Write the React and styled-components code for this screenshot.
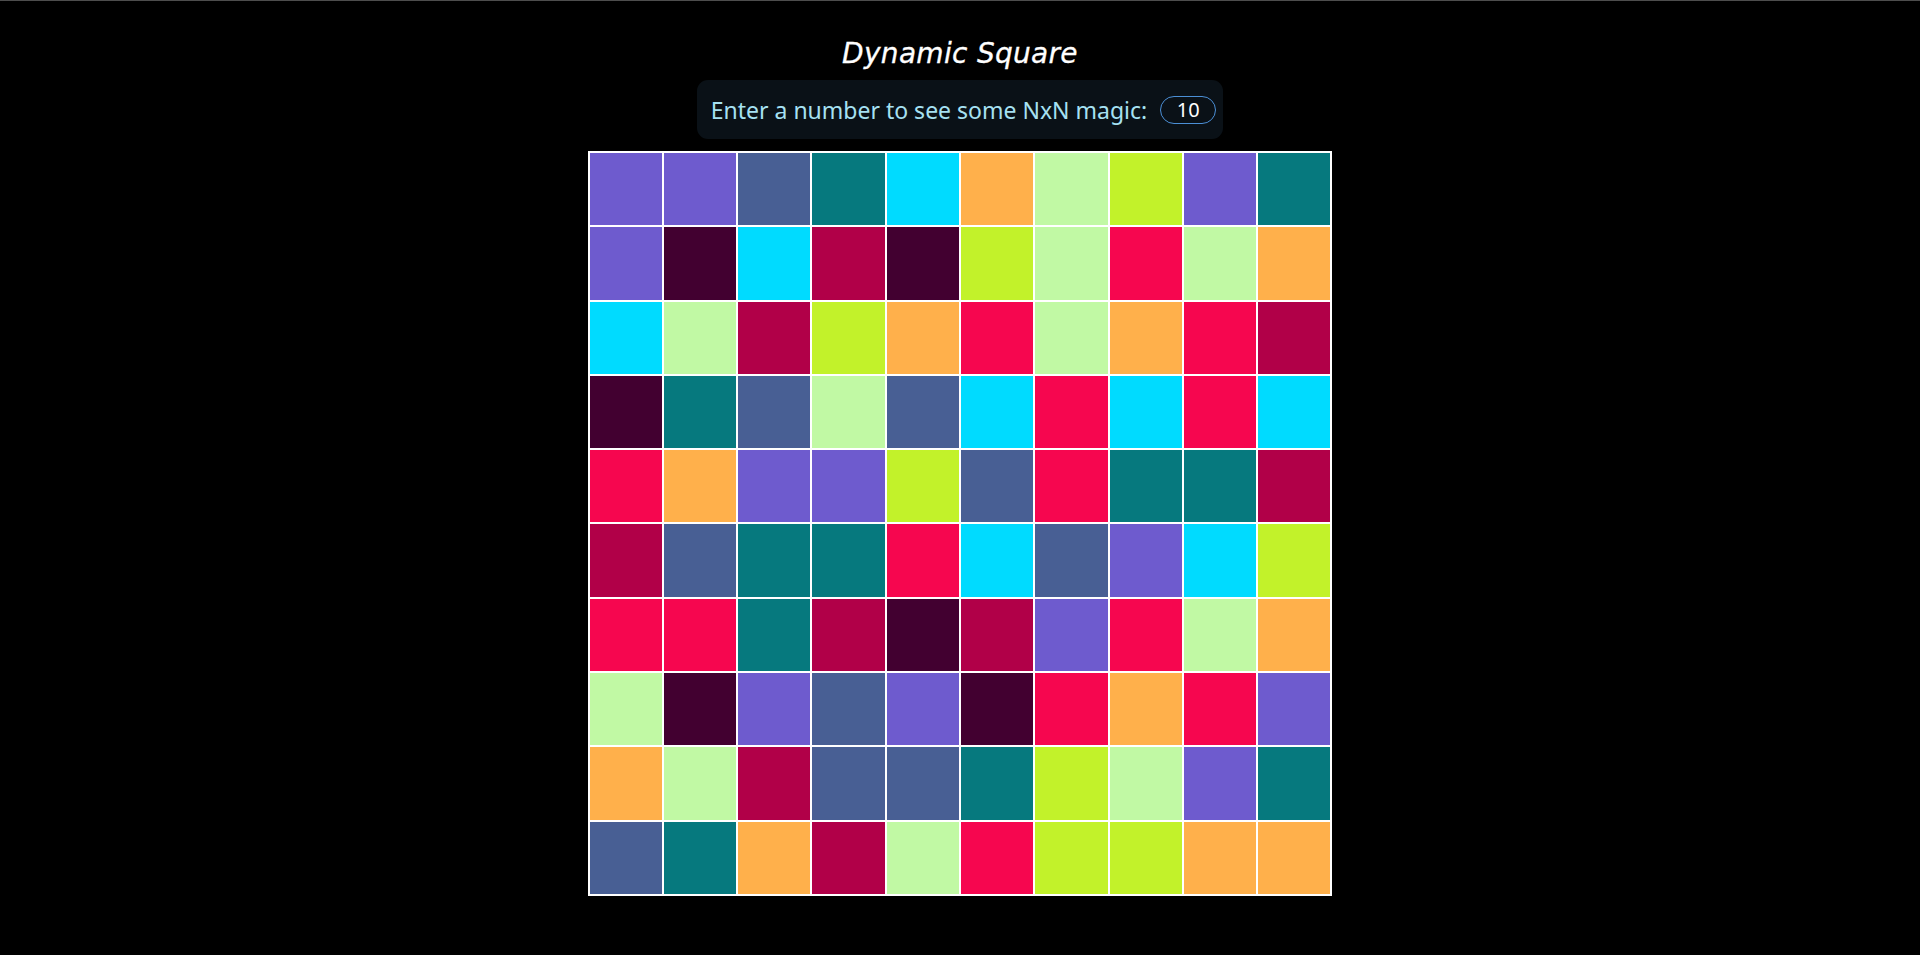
import { useState } from 'react'
import styled, { createGlobalStyle } from 'styled-components'

const palette = {
  P: '#6e5bce',
  S: '#485f94',
  T: '#06797e',
  C: '#00dbff',
  O: '#ffb04b',
  G: '#c1f9a4',
  L: '#c2f22a',
  M: '#420030',
  K: '#b10048',
  R: '#f6064f',
}

const layout = [
  'PPSTCOGLPT',
  'PMCKMLGRGO',
  'CGKLORGORK',
  'MTSGSCRCRC',
  'ROPPLSRTTK',
  'KSTTRCSPCL',
  'RRTKMKPRGO',
  'GMPSPMRORP',
  'OGKSSTLGPT',
  'STOKGRLLOO',
]

const GlobalStyle = createGlobalStyle`
  html, body {
    margin: 0;
    padding: 0;
    background: #000;
  }
  body {
    border-top: 1px solid #4d4d4d;
    font-family: "Noto Sans", "Open Sans", sans-serif;
  }
`

export default function App() {
  const [size, setSize] = useState(10)
  const n = Math.max(1, Math.min(size || 10, 10))
  const cells = layout.slice(0, n).flatMap((row) => row.slice(0, n).split(''))

  return (
    <Page>
      <GlobalStyle />
      <Title>Dynamic Square</Title>
      <Prompt>
        <label htmlFor="count">Enter a number to see some NxN magic:</label>
        <NumberInput
          id="count"
          value={size}
          onChange={(e) => setSize(parseInt(e.target.value, 10) || '')}
        />
      </Prompt>
      <Board $n={n}>
        {cells.map((c, i) => (
          <Cell key={i} $color={palette[c]} />
        ))}
      </Board>
    </Page>
  )
}

const Page = styled.main`
  display: flex;
  flex-direction: column;
  align-items: center;
  padding-top: 35px;
  min-height: 100vh;
  box-sizing: border-box;
`

const Title = styled.h1`
  margin: 0 0 8px;
  font-family: "DejaVu Sans", "Open Sans", sans-serif;
  font-style: italic;
  font-weight: 400;
  font-size: 28px;
  line-height: 36px;
  color: #fff;
  letter-spacing: 0.3px;
  -webkit-text-stroke: 0.3px #fff;
`

const Prompt = styled.div`
  display: flex;
  align-items: center;
  height: 59px;
  box-sizing: border-box;
  padding: 0 7px 0 14px;
  border-radius: 11px;
  background: #0a1117;
  color: #a6e1f2;
  font-size: 23px;

  label {
    margin-right: 13px;
  }
`

const NumberInput = styled.input`
  width: 56px;
  height: 28px;
  box-sizing: border-box;
  border: 1px solid #4b8fd6;
  border-radius: 14px;
  background: transparent;
  color: #fff;
  font-family: "Noto Sans", sans-serif;
  font-size: 20px;
  text-align: center;
  outline: none;
  padding: 0;
`

const Board = styled.section`
  margin-top: 12px;
  width: 78vh;
  height: 78vh;
  box-sizing: border-box;
  border: 1px solid #fff;
  display: grid;
  grid-template-columns: repeat(${(p) => p.$n}, 1fr);
  grid-template-rows: repeat(${(p) => p.$n}, 1fr);
`

const Cell = styled.div`
  border: 1px solid #fff;
  background: ${(p) => p.$color};
`
